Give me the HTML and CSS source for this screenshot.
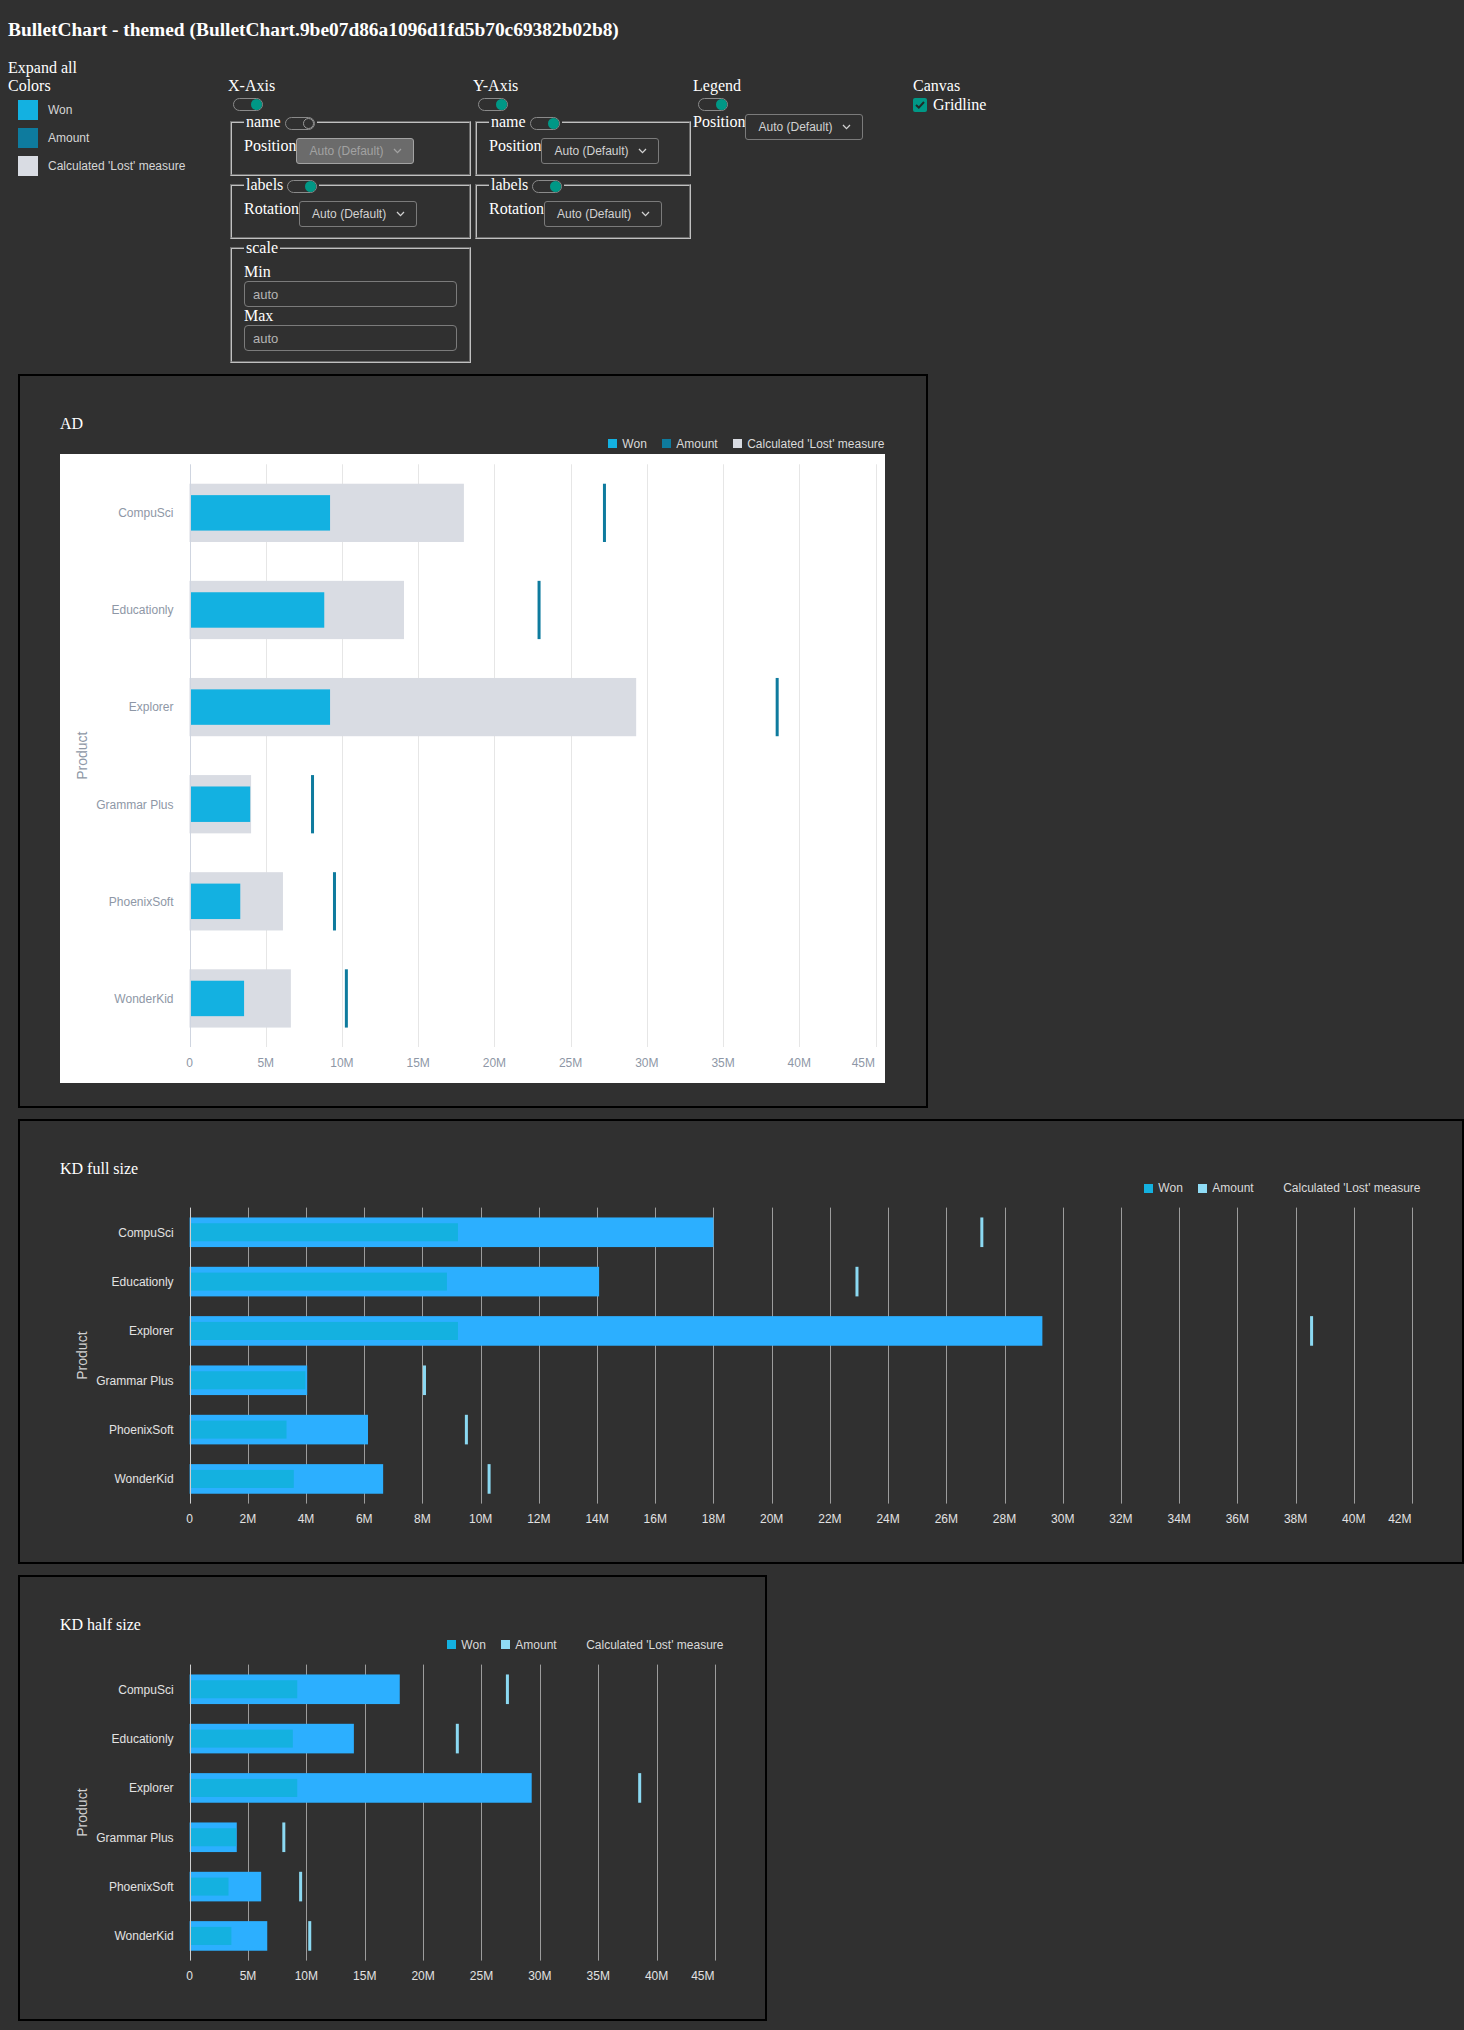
FILE: index.html
```html
<!DOCTYPE html>
<html lang="en">
<head>
<meta charset="utf-8">
<title>BulletChart - themed</title>
<link rel="stylesheet" href="styles.css">
</head>
<body>
<h3 class="page-title">BulletChart - themed (BulletChart.9be07d86a1096d1fd5b70c69382b02b8)</h3>
<div class="expand">Expand all</div>
<div class="controls">
  <div class="col">
    <div class="col-head">Colors</div>
    <ul class="swatches">
      <li class="swatch-row"><span class="swatch sw-won"></span><span class="swatch-label">Won</span></li>
      <li class="swatch-row"><span class="swatch sw-amount"></span><span class="swatch-label">Amount</span></li>
      <li class="swatch-row"><span class="swatch sw-lost"></span><span class="swatch-label">Calculated 'Lost' measure</span></li>
    </ul>
  </div>

  <div class="col col-wide">
    <div class="col-head">X-Axis</div>
    <span class="toggle"><span class="knob"></span></span>
    <fieldset class="group">
      <legend>name <span class="toggle inline off"><span class="knob"></span></span></legend>
      <div class="field-row">
        <span class="field-label">Position</span>
        <div class="select disabled"><span>Auto (Default)</span><svg class="chev" width="9" height="6" viewBox="0 0 9 6"><polyline points="1,1 4.5,4.6 8,1"/></svg></div>
      </div>
    </fieldset>
    <fieldset class="group">
      <legend>labels <span class="toggle inline"><span class="knob"></span></span></legend>
      <div class="field-row">
        <span class="field-label">Rotation</span>
        <div class="select"><span>Auto (Default)</span><svg class="chev" width="9" height="6" viewBox="0 0 9 6"><polyline points="1,1 4.5,4.6 8,1"/></svg></div>
      </div>
    </fieldset>
    <fieldset class="group">
      <legend>scale</legend>
      <div class="field-label">Min</div>
      <input class="text-input" type="text" value="auto">
      <div class="field-label">Max</div>
      <input class="text-input" type="text" value="auto">
    </fieldset>
  </div>

  <div class="col">
    <div class="col-head">Y-Axis</div>
    <span class="toggle"><span class="knob"></span></span>
    <fieldset class="group">
      <legend>name <span class="toggle inline"><span class="knob"></span></span></legend>
      <div class="field-row">
        <span class="field-label">Position</span>
        <div class="select"><span>Auto (Default)</span><svg class="chev" width="9" height="6" viewBox="0 0 9 6"><polyline points="1,1 4.5,4.6 8,1"/></svg></div>
      </div>
    </fieldset>
    <fieldset class="group">
      <legend>labels <span class="toggle inline"><span class="knob"></span></span></legend>
      <div class="field-row">
        <span class="field-label">Rotation</span>
        <div class="select"><span>Auto (Default)</span><svg class="chev" width="9" height="6" viewBox="0 0 9 6"><polyline points="1,1 4.5,4.6 8,1"/></svg></div>
      </div>
    </fieldset>
  </div>

  <div class="col">
    <div class="col-head">Legend</div>
    <span class="toggle"><span class="knob"></span></span>
    <div class="field-row">
      <span class="field-label">Position</span>
      <div class="select"><span>Auto (Default)</span><svg class="chev" width="9" height="6" viewBox="0 0 9 6"><polyline points="1,1 4.5,4.6 8,1"/></svg></div>
    </div>
  </div>

  <div class="col">
    <div class="col-head">Canvas</div>
    <div class="check-row">
      <span class="checkbox"><svg width="10" height="8" viewBox="0 0 10 8"><polyline points="1,4 3.8,6.6 9,1"/></svg></span>
      <span>Gridline</span>
    </div>
  </div>
</div>

<section class="panel panel-ad">
  <div class="chart-title">AD</div>
  <div class="legend">
    <span class="lg-item"><span class="lg-sq ad-won"></span>Won</span>
    <span class="lg-item"><span class="lg-sq ad-amount"></span>Amount</span>
    <span class="lg-item"><span class="lg-sq ad-lost"></span>Calculated 'Lost' measure</span>
  </div>
  <svg class="plot theme-ad" width="826" height="629" data-bg="825" data-top="10.3" data-bottom="593" data-ox="129.5" data-right="815.5" data-max="45" data-step="5" data-ticky="612.9"></svg>
</section>

<section class="panel panel-full">
  <div class="chart-title">KD full size</div>
  <div class="legend">
    <span class="lg-item"><span class="lg-sq kd-won"></span>Won</span>
    <span class="lg-item"><span class="lg-sq kd-amount"></span>Amount</span>
    <span class="lg-item"><span class="lg-sq kd-lost"></span>Calculated 'Lost' measure</span>
  </div>
  <svg class="plot theme-kd" width="1362" height="341" data-top="9.6" data-bottom="305.6" data-ox="129.6" data-right="1352" data-max="42" data-step="2" data-ticky="325"></svg>
</section>

<section class="panel panel-half">
  <div class="chart-title">KD half size</div>
  <div class="legend">
    <span class="lg-item"><span class="lg-sq kd-won"></span>Won</span>
    <span class="lg-item"><span class="lg-sq kd-amount"></span>Amount</span>
    <span class="lg-item"><span class="lg-sq kd-lost"></span>Calculated 'Lost' measure</span>
  </div>
  <svg class="plot theme-kd" width="665" height="341" data-top="9.6" data-bottom="305.6" data-ox="129.6" data-right="655" data-max="45" data-step="5" data-ticky="325"></svg>
</section>

<script src="chart.js"></script>
</body>
</html>
```

FILE: styles.css
```css
html, body {
  background: #303030;
}
body {
  margin: 0;
  padding: 0 8px 8px;
  color: #ffffff;
  font-family: "Liberation Serif", "Times New Roman", serif;
  font-size: 16px;
  line-height: 18.4px;
}
.page-title {
  font-size: 19.4px;
  line-height: 22.3px;
  font-weight: bold;
  margin: 19px 0 17.5px;
}
.controls {
  display: flex;
  align-items: flex-start;
}
.col {
  flex: none;
  width: 220px;
}
.col-wide {
  width: 245px;
}
.swatches {
  list-style: none;
  margin: 0;
  padding: 0 0 0 10px;
}
.swatch-row {
  display: flex;
  align-items: center;
  height: 28px;
}
.swatch {
  width: 20px;
  height: 20px;
  margin-right: 10px;
}
.sw-won { background: #13b1e1; }
.sw-amount { background: #0e7b9e; }
.sw-lost { background: #d9dce3; }
.swatch-label {
  font: 12px/14px "Liberation Sans", Arial, sans-serif;
  color: #d6d6d6;
}

/* switches */
.toggle {
  box-sizing: border-box;
  display: flex;
  justify-content: flex-end;
  align-items: center;
  width: 30px;
  height: 13px;
  margin: 2px 0 2px 5px;
  border: 1px solid #8a8a8a;
  border-radius: 7px;
}
.toggle .knob {
  width: 11px;
  height: 11px;
  border-radius: 50%;
  background: #009886;
}
.toggle.off .knob {
  box-sizing: border-box;
  background: #303030;
  border: 1.5px solid #9a9a9a;
}
.toggle.inline {
  display: inline-flex;
  margin: 0;
  vertical-align: -2px;
}

/* fieldsets */
.group {
  margin: 0 2px;
  padding: 5.6px 12px 10px;
  border: 2px groove #c0c0c0;
  min-width: 0;
}
.group legend {
  padding: 0 2px;
  line-height: 18.4px;
}
.field-row {
  display: flex;
  align-items: flex-start;
}
.select {
  box-sizing: border-box;
  display: flex;
  align-items: center;
  justify-content: space-between;
  flex: none;
  width: 118px;
  height: 26px;
  margin-top: 1px;
  padding: 0 11px 0 12px;
  border: 1px solid #7b7b7b;
  border-radius: 3px;
  font: 12px/14px "Liberation Sans", Arial, sans-serif;
  color: #d2d2d2;
}
.select.disabled {
  background: #6b6b6b;
  border-color: #a3a3a3;
  color: #a2a2a2;
}
.chev polyline {
  fill: none;
  stroke: currentColor;
  stroke-width: 1.3;
}
.text-input {
  box-sizing: border-box;
  display: block;
  width: 100%;
  height: 26px;
  margin: 0;
  padding: 0 8px;
  border: 1px solid #7b7b7b;
  border-radius: 4px;
  background: transparent;
  font: 13px "Liberation Sans", Arial, sans-serif;
  color: #b4b4b4;
}
.check-row {
  display: flex;
  align-items: center;
}
.checkbox {
  display: flex;
  align-items: center;
  justify-content: center;
  width: 14px;
  height: 14px;
  margin-right: 6px;
  border-radius: 2px;
  background: #009886;
}
.checkbox polyline {
  fill: none;
  stroke: #1f2a28;
  stroke-width: 2;
}

/* chart panels */
.panel {
  box-sizing: border-box;
  margin: 11px 0 0 10px;
  padding: 39px 40px 23px;
  border: 2px solid #000;
}
.panel-ad { width: 910px; }
.panel-full { width: 1446px; }
.panel-half { width: 749px; }
.chart-title {
  font-size: 16px;
  color: #ffffff;
}
.legend {
  display: flex;
  justify-content: flex-end;
  align-items: center;
  height: 20px;
  padding-right: 1.5px;
  font: 12px/14px "Liberation Sans", Arial, sans-serif;
  color: #dadada;
}
.lg-item {
  display: flex;
  align-items: center;
  margin-left: 15.5px;
}
.lg-item:first-child { margin-left: 0; }
.lg-sq {
  width: 9px;
  height: 9px;
  margin-right: 5px;
}
.ad-won { background: #13b1e1; }
.ad-amount { background: #0e7b9e; }
.ad-lost { background: #d9dce3; }
.kd-won { background: #14b1e0; }
.kd-amount { background: #8fdcf5; }
.kd-lost { background: transparent; }
.plot {
  display: block;
  font-family: "Liberation Sans", Arial, sans-serif;
}
.plot .tick, .plot .cat { font-size: 12px; }
.plot .axis-title { font-size: 14px; }

.theme-ad .plot-bg { fill: #ffffff; }
.theme-ad .grid { stroke: #e6e6e6; stroke-width: 1; }
.theme-ad .axis { stroke: #cfd5e0; stroke-width: 1; }
.theme-ad .bar-lost { fill: #d9dce3; }
.theme-ad .bar-won { fill: #13b1e1; }
.theme-ad .bar-amount { fill: #0e7b9e; }
.theme-ad .tick, .theme-ad .cat, .theme-ad .axis-title { fill: #8e97a6; }

.theme-kd .grid { stroke: #9c9c9c; stroke-width: 1; }
.theme-kd .axis { stroke: #cfcfcf; stroke-width: 1; }
.theme-kd .bar-lost { fill: #2cafff; }
.theme-kd .bar-won { fill: #14b1e0; }
.theme-kd .bar-amount { fill: #8bd9f2; }
.theme-kd .tick, .theme-kd .cat { fill: #e2e2e2; }
.theme-kd .axis-title { fill: #d0d0d0; }
```

FILE: chart.js
```js
(function () {
  var NS = "http://www.w3.org/2000/svg";
  var cats = ["CompuSci", "Educationly", "Explorer", "Grammar Plus", "PhoenixSoft", "WonderKid"];
  var lost = [18.0, 14.07, 29.3, 4.04, 6.13, 6.65];
  var won = [9.22, 8.84, 9.22, 3.98, 3.33, 3.58];
  var amount = [27.22, 22.93, 38.55, 8.07, 9.51, 10.29];

  function add(parent, name, attrs, text) {
    var e = document.createElementNS(NS, name);
    for (var k in attrs) { e.setAttribute(k, attrs[k]); }
    if (text !== undefined) { e.textContent = text; }
    parent.appendChild(e);
    return e;
  }

  var svgs = document.querySelectorAll("svg.plot");
  for (var s = 0; s < svgs.length; s++) {
    var svg = svgs[s];
    var d = svg.dataset;
    var H = +svg.getAttribute("height");
    var top = +d.top, bottom = +d.bottom, ox = +d.ox, right = +d.right;
    var max = +d.max, step = +d.step, tickY = +d.ticky;
    var scale = (right - ox) / max;
    var n = Math.round(max / step);
    var k;

    if (d.bg) { add(svg, "rect", { x: 0, y: 0, width: d.bg, height: H, "class": "plot-bg" }); }

    for (k = 1; k <= n; k++) {
      var gx = Math.round(ox + k * step * scale) + 0.5;
      add(svg, "line", { x1: gx, x2: gx, y1: top, y2: bottom, "class": "grid" });
    }

    var band = (bottom - top) / cats.length;
    for (var i = 0; i < cats.length; i++) {
      var cy = top + band * (i + 0.5);
      var hb = band * 0.6, hw = band * 0.365;
      add(svg, "rect", { x: ox, y: cy - hb / 2, width: lost[i] * scale, height: hb, "class": "bar-lost" });
      add(svg, "rect", { x: ox + 0.5, y: cy - hw / 2, width: won[i] * scale - 0.5, height: hw, "class": "bar-won" });
      add(svg, "rect", { x: ox + amount[i] * scale - 1.5, y: cy - hb / 2, width: 3, height: hb, "class": "bar-amount" });
      add(svg, "text", { x: ox - 16, y: cy + 4.3, "class": "cat", "text-anchor": "end" }, cats[i]);
    }

    var ax = Math.round(ox) + 0.5;
    add(svg, "line", { x1: ax, x2: ax, y1: top, y2: bottom, "class": "axis" });

    for (k = 0; k <= n; k++) {
      var v = k * step;
      var tx = ox + v * scale;
      var anchor = "middle";
      if (k === n) { anchor = "end"; tx = right - 0.5; }
      add(svg, "text", { x: tx, y: tickY, "class": "tick", "text-anchor": anchor }, v === 0 ? "0" : v + "M");
    }

    var my = (top + bottom) / 2;
    add(svg, "text", { x: 27, y: my, "class": "axis-title", "text-anchor": "middle", transform: "rotate(-90 27 " + my + ")" }, "Product");
  }
})();
```
